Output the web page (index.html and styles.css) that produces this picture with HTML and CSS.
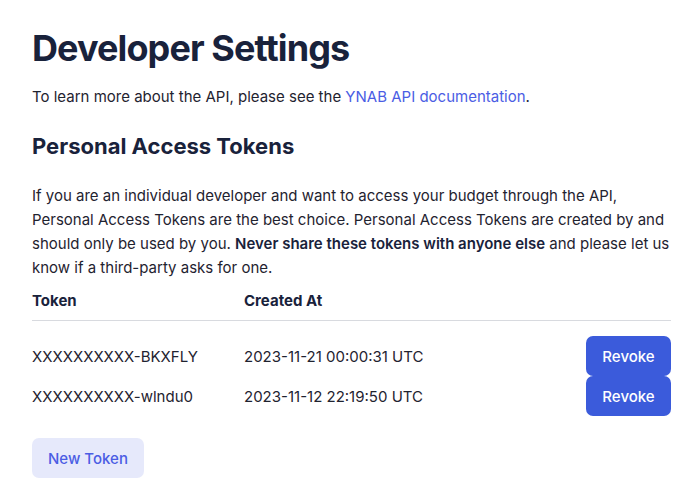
FILE: index.html
```html
<!DOCTYPE html>
<html>
<head>
<meta charset="utf-8">
<link rel="stylesheet" href="styles.css">
</head>
<body>
<main class="page">
  <h1 class="title">Developer Settings</h1>
  <p class="intro">To learn more about the API, please see the <a class="link" href="#">YNAB API documentation</a>.</p>
  <h2 class="subtitle">Personal Access Tokens</h2>
  <p class="desc">If you are an individual developer and want to access your budget through the API, Personal Access Tokens are the best choice. Personal Access Tokens are created by and should only be used by you. <strong>Never share these tokens with anyone else</strong> and please let us know if a third-party asks for one.</p>
  <div class="table">
    <div class="row head">
      <div class="c-token">Token</div>
      <div class="c-date">Created At</div>
      <div class="c-act"></div>
    </div>
    <div class="body">
      <div class="row">
        <div class="c-token">XXXXXXXXXX-BKXFLY</div>
        <div class="c-date">2023-11-21 00:00:31 UTC</div>
        <div class="c-act"><button class="btn-revoke">Revoke</button></div>
      </div>
      <div class="row">
        <div class="c-token">XXXXXXXXXX-wlndu0</div>
        <div class="c-date">2023-11-12 22:19:50 UTC</div>
        <div class="c-act"><button class="btn-revoke">Revoke</button></div>
      </div>
    </div>
  </div>
  <button class="btn-new">New Token</button>
</main>
</body>
</html>
```
FILE: styles.css
```css
* { box-sizing: border-box; }
html, body { margin: 0; background: #fff; }
body {
  font-family: Inter, "Noto Sans", sans-serif;
  color: #1f2330;
  font-size: 15px;
}
.page {
  padding: 24px 2px 0 32px;
}
.title {
  margin: 0;
  font-size: 36px;
  line-height: 48px;
  font-weight: 700;
  color: #19223b;
  letter-spacing: -0.9px;
}
.intro {
  margin: 13px 0 0;
  line-height: 24px;
}
.link { color: #4b5de4; text-decoration: none; }
.subtitle {
  margin: 22px 0 0;
  font-size: 22px;
  line-height: 30px;
  font-weight: 700;
  color: #19223b;
}
.desc {
  margin: 23px 0 0;
  line-height: 24px;
}
.desc strong { font-weight: 600; color: #19223b; }
.table { margin-top: 9px; }
.row {
  display: flex;
  align-items: center;
}
.head {
  font-weight: 700;
  color: #19223b;
  height: 32px;
  align-items: flex-start;
  padding-top: 2px;
  border-bottom: 1px solid #d8dadf;
}
.body { padding-top: 15px; }
.body .row { height: 40px; }
.c-token { width: 212px; }
.c-date { flex: 1; }
.c-act { width: 85px; display: flex; }
.btn-revoke {
  font: inherit;
  font-weight: 500;
  width: 85px;
  height: 40px;
  border: none;
  border-radius: 7px;
  background: #3b5bdb;
  color: #fff;
}
.btn-new {
  margin-top: 22px;
  font: inherit;
  font-weight: 500;
  height: 40px;
  padding: 0 16px;
  border: none;
  border-radius: 7px;
  background: #e6e9fb;
  color: #4b5de4;
}
```
